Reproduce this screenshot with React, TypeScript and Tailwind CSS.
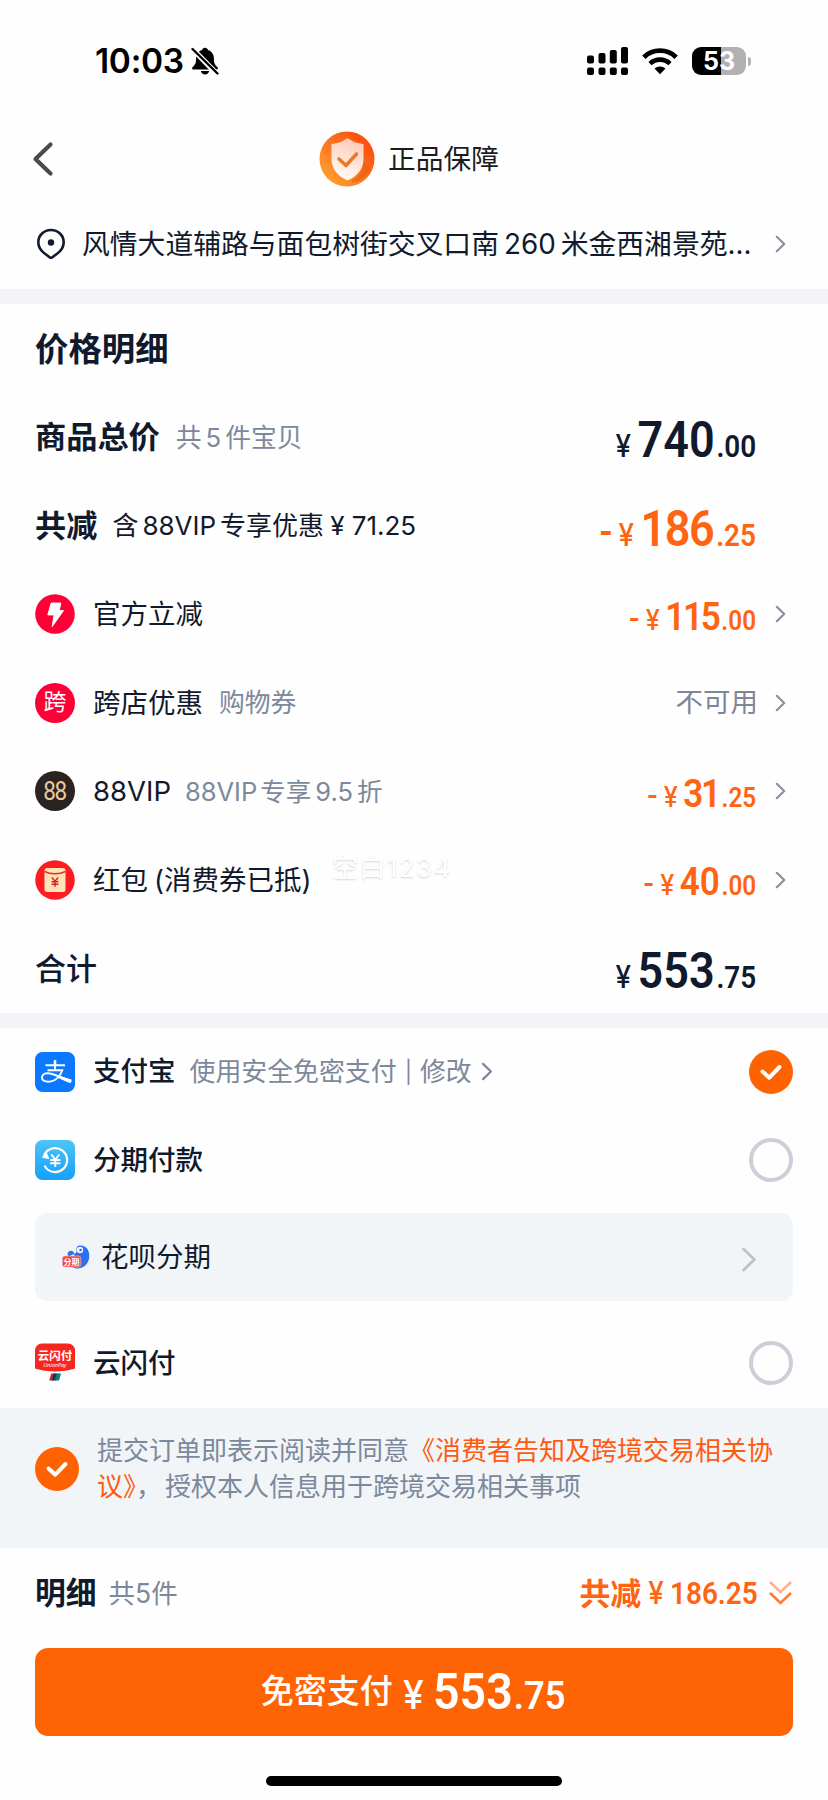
import React from 'react';

interface ChevronProps {
  className?: string;
  width?: number;
  height?: number;
  stroke?: number;
}

const Chevron: React.FC<ChevronProps> = ({ className = 'text-[#8a8f9c]', width = 11, height = 18, stroke = 2.2 }) => (
  <svg width={width} height={height} viewBox="0 0 11 18" fill="none" className={`shrink-0 ${className}`}>
    <path d="M1.8 1.8 9.2 9l-7.4 7.2" stroke="currentColor" strokeWidth={stroke} strokeLinecap="round" strokeLinejoin="round" />
  </svg>
);

interface PriceProps {
  whole: string;
  cents: string;
  large?: boolean;
  minus?: boolean;
}

const Price: React.FC<PriceProps> = ({ whole, cents, large, minus }) => {
  // Amounts with a 1 are set tighter, its side bearings are wide
  const tight = whole.includes('1');
  return (
    <div
      className={`flex origin-right scale-x-90 items-baseline whitespace-nowrap font-[Roboto] font-semibold leading-none ${
        minus ? 'text-[#ff6410]' : 'text-[#111a2c]'
      }`}
    >
      {minus && <span className={large ? 'mr-[7px] text-[42px] font-medium' : 'mr-[7px] text-[34px] font-medium'}>-</span>}
      <span className={large ? 'mr-[7px] font-[Inter] text-[31px] font-medium' : 'mr-[6px] font-[Inter] text-[28px] font-medium'}>¥</span>
      <span className={`${large ? 'text-[50px]' : 'text-[39px]'} ${tight ? (large ? 'tracking-[-1.5px]' : 'tracking-[-2.5px]') : ''}`}>
        {whole}
      </span>
      <span className={`${large ? 'text-[31px]' : 'text-[27px]'} ${tight ? 'ml-[3px]' : 'ml-[2px]'}`}>.{cents}</span>
    </div>
  );
};

interface RowProps {
  icon?: React.ReactNode;
  children: React.ReactNode;
  right?: React.ReactNode;
  arrow?: boolean;
}

const Row: React.FC<RowProps> = ({ icon, children, right, arrow }) => (
  <div className="flex h-[88.5px] shrink-0 items-center pl-[35px]">
    {icon && <div className="mr-[18px] shrink-0">{icon}</div>}
    <div className="flex flex-1 items-center pt-[1px]">{children}</div>
    <div className="pt-[6px]">{right}</div>
    <div className="flex w-[72px] pl-[19px]">{arrow && <Chevron />}</div>
  </div>
);

const Label: React.FC<{ children: React.ReactNode }> = ({ children }) => (
  <span className="text-[27.5px] text-[#111a2c]">{children}</span>
);

const Note: React.FC<{ children: React.ReactNode }> = ({ children }) => (
  <span className="ml-[16px] text-[25.8px] text-[#7c889c]">{children}</span>
);

const CheckedCircle = () => (
  <svg width="44" height="44" viewBox="0 0 44 44" fill="none" className="shrink-0">
    <circle cx="22" cy="22" r="22" fill="#ff6200" />
    <path d="M13.5 21.5l6.8 6.2L30.5 17" stroke="#fff" strokeWidth="4" strokeLinecap="round" strokeLinejoin="round" />
  </svg>
);

const EmptyCircle = () => <div className="size-[44px] shrink-0 rounded-full border-4 border-[#cccfd8]" />;

const StatusBar = () => (
  <div className="flex h-[122px] shrink-0 items-center pl-[95px] pr-[77px] text-black">
    <span className="pt-[2px] text-[33.5px] font-semibold leading-none tracking-[-0.3px]">10:03</span>
    <svg width="28" height="28" viewBox="0 0 28 28" className="ml-[7px]">
      <path d="M14 0.8c1.6 0 2.7 1 2.9 2.2 4 1.2 6 4.6 6 8.6 0 4.6.8 6.2 3.6 8.6.8.8.4 2.2-.9 2.2H2.4c-1.3 0-1.7-1.4-.9-2.2 2.8-2.4 3.6-4 3.6-8.6 0-4 2-7.4 6-8.6C11.3 1.8 12.4.8 14 .8Z" fill="currentColor" />
      <path d="M9.8 24h8.4c-.4 2-2 3.4-4.2 3.4S10.2 26 9.8 24Z" fill="currentColor" />
      <path d="M0 .5 27 28" stroke="#fff" strokeWidth="5.4" />
      <path d="M1.5 2 26.5 26.5" stroke="currentColor" strokeWidth="2.4" strokeLinecap="round" />
    </svg>
    <div className="flex-1" />
    <svg width="42" height="28" viewBox="0 0 42 28" fill="currentColor">
      <rect x="0" y="8.5" width="7" height="8" rx="2" />
      <rect x="11.5" y="6" width="7" height="10.5" rx="2" />
      <rect x="22.8" y="3" width="7" height="13.5" rx="2" />
      <rect x="34" y="0" width="7" height="16.5" rx="2" />
      <rect x="0" y="20.5" width="7" height="7.5" rx="2" />
      <rect x="11.5" y="20.5" width="7" height="7.5" rx="2" />
      <rect x="22.8" y="20.5" width="7" height="7.5" rx="2" />
      <rect x="34" y="20.5" width="7" height="7.5" rx="2" />
    </svg>
    <svg width="36" height="27" viewBox="0 0 36 27" fill="none" className="ml-[13px]">
      <path d="M1.8 9.2a23.5 23.5 0 0 1 32.4 0" stroke="currentColor" strokeWidth="4.8" />
      <path d="M8 15.6a14.5 14.5 0 0 1 20 0" stroke="currentColor" strokeWidth="4.6" />
      <path d="M12.5 20.6a8 8 0 0 1 11 0L18 26.2Z" fill="currentColor" />
    </svg>
    <div className="ml-[14px] flex h-[28px] w-[54px] items-center justify-center rounded-[9px] bg-[linear-gradient(to_right,#000_53%,#b1b1b1_53%)] text-[25px] font-bold leading-none text-white">
      53
    </div>
    <div className="ml-[2px] h-[9px] w-[3px] rounded-r-full bg-[#b1b1b1]" />
  </div>
);

const ShieldBadge = () => (
  <svg width="56" height="56" viewBox="0 0 56 56" fill="none">
    <defs>
      <linearGradient id="badge" x1="8" y1="46" x2="44" y2="10" gradientUnits="userSpaceOnUse">
        <stop stopColor="#ff9a2e" />
        <stop offset="1" stopColor="#fb5210" />
      </linearGradient>
      <linearGradient id="shield" x1="36" y1="8" x2="22" y2="44" gradientUnits="userSpaceOnUse">
        <stop stopColor="#ffc9b4" />
        <stop offset="1" stopColor="#fff8f0" />
      </linearGradient>
    </defs>
    <circle cx="28" cy="28" r="27.5" fill="url(#badge)" />
    <path d="M33 49c8-3 12-10 12-19l6 8c-3 7-9 12-18 14Z" fill="#c9540f" opacity="0.35" />
    <path d="M28.5 7c4.5 3.5 9.5 5.5 16 6v15c0 10-6 17-16 21.5C18.5 45 12.5 38 12.5 28V13c6.5-.5 11.5-2.5 16-6Z" fill="url(#shield)" />
    <path d="M20 28l7 6.5L37.5 23" stroke="#e97a2c" strokeWidth="3.6" strokeLinecap="round" strokeLinejoin="round" />
  </svg>
);

const BoltIcon = () => (
  <svg width="40" height="40" viewBox="0 0 40 40">
    <circle cx="20" cy="20" r="19.8" fill="#ff0036" />
    <path d="M16.2 9h9.6l-1.6 7.6h4.3L17.2 32.5l1.9-11.6h-6.3Z" fill="#fff" stroke="#fff" strokeWidth="1" strokeLinejoin="round" />
  </svg>
);

const EnvelopeIcon = () => (
  <svg width="40" height="40" viewBox="0 0 40 40">
    <circle cx="20" cy="20" r="19.8" fill="#fb1d22" />
    <rect x="9.5" y="8" width="21" height="24" rx="2.5" fill="#ffe3b8" />
    <path d="M9.5 11.5c6 3 15 3 21 0" stroke="#ef2a26" strokeWidth="1.4" fill="none" />
    <path d="M16.8 17.5l3.2 3.7 3.2-3.7M20 21.2v5.6M16.6 21.8h6.8M16.6 24.3h6.8" stroke="#d8231f" strokeWidth="1.5" fill="none" />
  </svg>
);

const AlipayIcon = () => (
  <svg width="40" height="40" viewBox="0 0 40 40" fill="none">
    <rect width="40" height="40" rx="7.5" fill="#0a78ff" />
    <path d="M10.5 13.3h19.5M20 8.3v10M12.5 18.3h14.8c-1.6 5-6.5 11.4-13.8 11.4-4 0-6.5-1.6-6.5-4.2 0-2.4 2.2-4.2 5.6-4.2 5 0 11.4 3.2 23.8 8.2" stroke="#fff" strokeWidth="1.9" />
    <path d="M24.2 23.3c3.5 1.6 7.8 3 12.3 4.2l-1 3.7c-4.5-1.4-9-3.4-13-5.6Z" fill="#fff" />
    <path d="M20 8.3v5" stroke="#fff" strokeWidth="2.6" />
  </svg>
);

const InstallmentIcon = () => (
  <svg width="40" height="40" viewBox="0 0 40 40" fill="none">
    <defs>
      <linearGradient id="inst" x1="0" y1="0" x2="0" y2="40" gradientUnits="userSpaceOnUse">
        <stop stopColor="#4fc4f5" />
        <stop offset="1" stopColor="#16a0f8" />
      </linearGradient>
    </defs>
    <rect width="40" height="40" rx="7.5" fill="url(#inst)" />
    <path d="M9.5 14.5A12 12 0 1 1 10 26.5" stroke="#fff" strokeWidth="2.2" strokeLinecap="round" />
    <path d="M7.5 17.3l3.5-5 2.8 6.3Z" fill="#fff" stroke="#fff" strokeWidth="1" strokeLinejoin="round" />
    <path d="M16.3 14.5l4 5 4-5M20.3 19.5v7.5M15.2 20h10.2M15.2 23.3h10.2" stroke="#fff" strokeWidth="1.9" />
  </svg>
);

const HuabeiIcon = () => (
  <svg width="28" height="26" viewBox="0 0 28 26" fill="none">
    <path d="M17 1.5c7-1 10.5 4.5 10.3 11C27 19.5 22 24.5 15.5 24.5c-3 0-5.5-1-7.5-2.5L5.5 10c.5-2 1.5-3 3.5-3.3 2 0 3 1.8 3.5 3.3 2-1 2.5-3 2-4.5-.5-1.5.5-3.5 2.5-4Z" fill="#2a70f0" />
    <circle cx="18" cy="6" r="3.2" fill="#f2f5f8" />
    <circle cx="18.6" cy="6" r="1.3" fill="#2a70f0" />
    <path d="M9 12.5l3-1.5" stroke="#f2f5f8" strokeWidth="2" />
    <rect x="0.3" y="12" width="18.5" height="11" rx="2.5" fill="#f04848" stroke="#f2c6cf" strokeWidth="0.6" />
    <text x="9.5" y="20.7" textAnchor="middle" fontSize="8" fontWeight="700" fill="#fff" fontFamily="Noto Sans CJK SC, sans-serif">分期</text>
  </svg>
);

const UnionPayIcon = () => (
  <svg width="40" height="40" viewBox="0 0 40 40" fill="none">
    <path d="M7 0.5h26a7 7 0 0 1 7 7V25.5c-12 4-28 4-40 0V7.5a7 7 0 0 1 7-7Z" fill="#f9261f" />
    <text x="20" y="16.8" textAnchor="middle" fontSize="11.5" fontWeight="700" fill="#fff" fontFamily="Noto Sans CJK SC, sans-serif">云闪付</text>
    <text x="20" y="24" textAnchor="middle" fontSize="5.5" fill="#fff" fontStyle="italic" fontFamily="Open Sans, sans-serif">UnionPay</text>
    <path d="M16.2 30.5h4.5L18.7 37.5h-4.5Z" fill="#cf2742" />
    <path d="M18.7 30.5h4.5L21.2 37.5h-4.5Z" fill="#17365f" />
    <path d="M21.7 30.5h4.3L24 37.5h-4.3Z" fill="#0b8080" />
  </svg>
);

const App: React.FC = () => (
  <div className="relative flex h-[1800px] w-[828px] flex-col overflow-hidden bg-[#fefefe] font-[Inter,'Noto_Sans_CJK_SC',sans-serif] leading-none whitespace-nowrap">
    <StatusBar />

    <header className="grid h-[73px] shrink-0 grid-cols-[1fr_auto_1fr] items-center pl-[32px] pr-[42px]">
      <svg width="22" height="36" viewBox="0 0 22 36" fill="none">
        <path d="M18.5 3.5 3.5 18l15 14.5" stroke="#4a4a4c" strokeWidth="4.2" strokeLinecap="round" strokeLinejoin="round" />
      </svg>
      <div className="flex items-center gap-[13px]">
        <ShieldBadge />
        <span className="pt-[2px] text-[27.7px] text-[#1c1c1e]">正品保障</span>
      </div>
    </header>

    <div className="flex h-[94px] shrink-0 items-center pl-[36px] pt-[4px]">
      <svg width="30" height="32" viewBox="0 0 30 32" fill="none">
        <path d="M15 2C8 2 2.3 7.3 2.3 14.3c0 5 2.5 8.7 7 11.7l4.3 3.2c.9.7 1.900.7 2.800 0L20.700 26c4.500-3 7-6.700 7-11.700C27.700 7.300 22 2 15 2Z" stroke="#111a2c" strokeWidth="2.6" />
        <circle cx="15" cy="14.5" r="3.2" fill="#111a2c" />
      </svg>
      <span className="ml-[16px] w-[682px] pt-[2px] text-[27.8px] text-[#111a2c]">
        风情大道辅路与面包树街交叉口南<span className="mx-[5px]">260</span>米金西湘景苑...
      </span>
      <Chevron className="ml-[11px] text-[#8a8f9c]" />
    </div>

    <div className="h-[15px] shrink-0 bg-[#f3f4f8]" />

    <section className="shrink-0">
      <h2 className="flex h-[89px] items-center pl-[35px] pt-[2px] text-[33.4px] font-semibold text-[#111a2c]">价格明细</h2>
      <Row right={<Price whole="740" cents="00" large />}>
        <span className="text-[31.2px] font-semibold text-[#111a2c]">商品总价</span>
        <Note>共<span className="mx-[4px]">5</span>件宝贝</Note>
      </Row>
      <Row right={<Price whole="186" cents="25" large minus />}>
        <span className="text-[31.2px] font-semibold text-[#111a2c]">共减</span>
        <span className="ml-[15px] text-[26px] text-[#111a2c]">
          含<span className="mx-[4px]">88VIP</span>专享优惠<span className="ml-[6px]">¥ 71.25</span>
        </span>
      </Row>
      <Row icon={<BoltIcon />} right={<Price whole="115" cents="00" minus />} arrow>
        <Label>官方立减</Label>
      </Row>
      <Row
        icon={<div className="flex size-[40px] items-center justify-center rounded-full bg-[#ff0036] text-[23px] text-white">跨</div>}
        right={<div className="-mr-[2px] -mt-[6px] text-[27.5px] text-[#7f8694]">不可用</div>}
        arrow
      >
        <Label>跨店优惠</Label>
        <Note>购物券</Note>
      </Row>
      <Row
        icon={
          <div className="flex size-[40px] items-center justify-center rounded-full bg-[#2b231f] font-[Roboto] text-[25px] tracking-[-1.5px] text-[#ecc99d]">
            <span className="scale-x-90">88</span>
          </div>
        }
        right={<Price whole="31" cents="25" minus />}
        arrow
      >
        <Label>88VIP</Label>
        <span className="ml-[14px] text-[25.5px] text-[#7c889c]">
          88VIP<span className="ml-[3px]">专享</span><span className="mx-[4px]">9.5</span>折
        </span>
      </Row>
      <Row icon={<EnvelopeIcon />} right={<Price whole="40" cents="00" minus />} arrow>
        <Label>红包<span className="ml-[6px]">(</span>消费券已抵)</Label>
      </Row>
      <Row right={<Price whole="553" cents="75" large />}>
        <span className="text-[31px] font-medium text-[#111a2c]">合计</span>
      </Row>
    </section>

    <div className="h-[15px] shrink-0 bg-[#f3f4f8]" />

    <section className="shrink-0 px-[35px]">
      <div className="flex h-[88px] items-center">
        <AlipayIcon />
        <span className="ml-[18px] pt-[1px] text-[27.5px] font-medium text-[#111a2c]">支付宝</span>
        <span className="ml-[14px] flex items-center pt-[1px] text-[25.9px] text-[#7c889c]">
          使用安全免密支付<span className="mx-[8px] text-[22px]">|</span>修改
        </span>
        <Chevron className="ml-[9px] text-[#7c889c]" width={12} height={19} />
        <div className="ml-auto"><CheckedCircle /></div>
      </div>
      <div className="flex h-[88.5px] items-center">
        <InstallmentIcon />
        <span className="ml-[18px] pt-[2px] text-[27.5px] font-medium text-[#111a2c]">分期付款</span>
        <div className="ml-auto"><EmptyCircle /></div>
      </div>
      <div className="mt-[9px] flex h-[88px] items-center rounded-[12px] bg-[#f2f5f8] pl-[27px] pr-[36px]">
        <HuabeiIcon />
        <span className="ml-[11px] pt-[2px] text-[27.5px] text-[#111a2c]">花呗分期</span>
        <Chevron className="ml-auto mt-[5px] text-[#bfc2c8]" width={16} height={27} stroke={2} />
      </div>
      <div className="flex h-[106.5px] items-center pt-[17px]">
        <UnionPayIcon />
        <span className="ml-[18px] pt-[2px] text-[27.5px] font-medium text-[#111a2c]">云闪付</span>
        <div className="ml-auto"><EmptyCircle /></div>
      </div>
    </section>

    <div className="flex h-[140px] shrink-0 bg-[#f2f5f8] pl-[35px] pt-[25px]">
      <div className="pt-[14px]"><CheckedCircle /></div>
      <p className="ml-[18px] text-[26px] leading-[36px] text-[#7c889c]">
        提交订单即表示阅读并同意<span className="text-[#ff5a0f]">《消费者告知及跨境交易相关协<br />议》</span>，<span className="ml-[3px]">授权本人信息用于跨境交易相关事项</span>
      </p>
    </div>

    <div className="flex h-[91px] shrink-0 items-center pl-[35px] pr-[35px]">
      <span className="text-[30.8px] font-semibold text-[#111a2c]">明细</span>
      <span className="ml-[12px] text-[26.5px] text-[#7c889c]">共5件</span>
      <span className="ml-auto text-[31px] font-semibold text-[#ff6410]">共减</span>
      <span className="-ml-[5px] flex origin-right scale-x-90 items-baseline text-[#ff6410]">
        <span className="font-[Inter] text-[31px] font-medium">¥</span>
        <span className="ml-[7px] font-[Roboto] text-[31px] font-semibold">186.25</span>
      </span>
      <svg width="25" height="26" viewBox="0 0 25 26" fill="none" className="ml-[10px]">
        <path d="M2 2l10.5 10L23 2" stroke="#ffb08a" strokeWidth="2.6" />
        <path d="M2 13l10.5 10L23 13" stroke="#ff7a35" strokeWidth="2.6" />
      </svg>
    </div>

    <button className="mx-[35px] mt-[9px] flex h-[88px] shrink-0 items-center justify-center rounded-[13px] bg-[#ff6404] text-white">
      <span className="text-[33px] font-medium">免密支付</span>
      <span className="-mr-[10px] ml-[10px] flex origin-left scale-x-[0.93] items-baseline font-[Roboto] font-semibold">
        <span className="font-[Inter] text-[40px] font-medium">¥</span>
        <span className="ml-[10px] text-[50px]">553</span>
        <span className="ml-[1px] text-[39px]">.75</span>
      </span>
    </button>

    <div className="mx-auto mt-[40px] h-[10px] w-[296px] shrink-0 rounded-full bg-black" />

    <div className="absolute left-[332px] top-[855px] text-[26px] tracking-[1.4px] text-white [text-shadow:0_1px_2px_#d4d4d8]">空白1234</div>
  </div>
);

export default App;
